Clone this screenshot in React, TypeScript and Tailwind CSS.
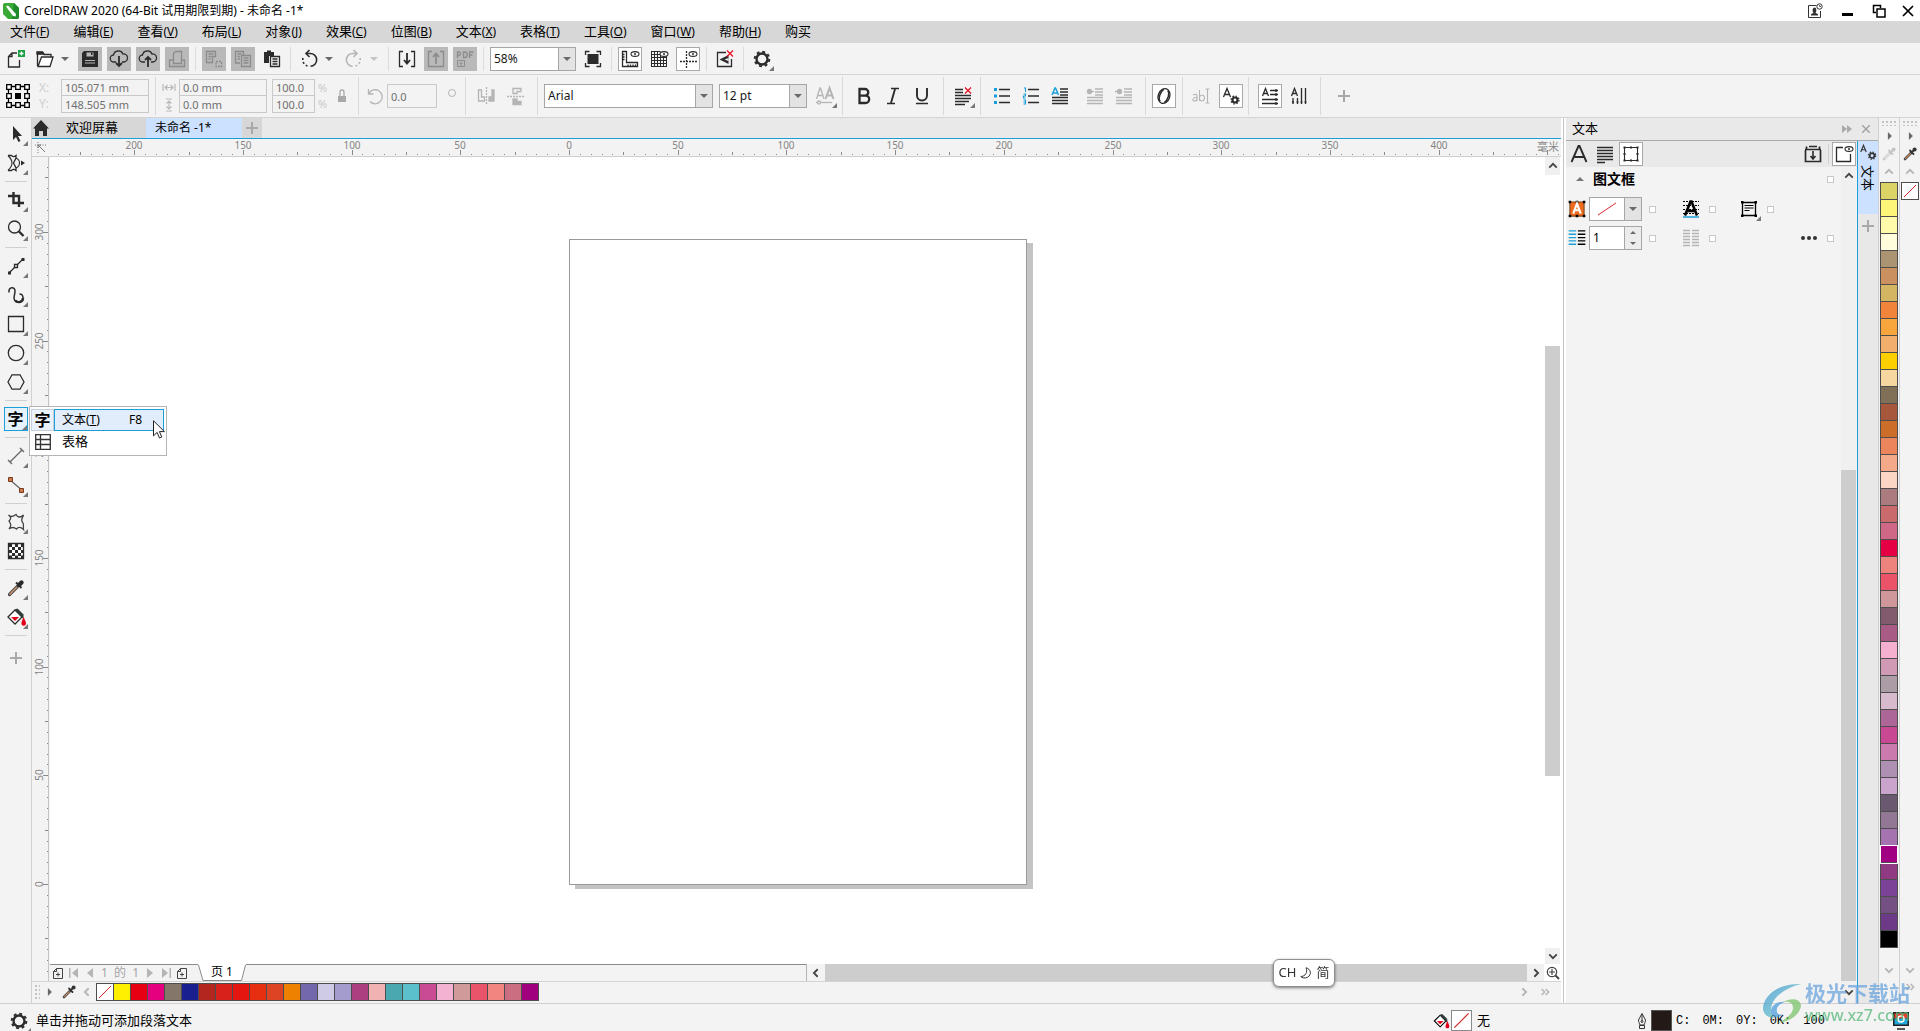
import type { ReactNode } from "react";
import clsx from "clsx";

const MENUS = [
  ["文件", "F"],
  ["编辑", "E"],
  ["查看", "V"],
  ["布局", "L"],
  ["对象", "J"],
  ["效果", "C"],
  ["位图", "B"],
  ["文本", "X"],
  ["表格", "T"],
  ["工具", "O"],
  ["窗口", "W"],
  ["帮助", "H"],
  ["购买", ""],
];

const DOC_COLORS = [
  "#fef000", "#e60012", "#e4007f", "#847668", "#1a1f8f", "#b3261f", "#d8211a",
  "#e5160f", "#e62f10", "#dd4424", "#ee8200", "#7468ad", "#cfcbe6", "#a49ccc",
  "#ab3f80", "#f1b2b4", "#4aa8b0", "#5cc0cc", "#c84b94", "#f3b2d2", "#d19a9a",
  "#e9546b", "#f28580", "#cb6e82", "#a0007e",
];

const PALETTE = [
  "#dcd366", "#fcf578", "#fffbaa", "#fffddb", "#ab9472", "#ca9060", "#d4b562",
  "#f0843b", "#f6a63c", "#f2ae6c", "#fccf00", "#f7d7a0", "#817058", "#a7573c",
  "#cd6d2a", "#ec855c", "#f4aa88", "#fbd6c5", "#ab7b80", "#cb6a6c", "#cf6887",
  "#e50046", "#ee837d", "#eb5468", "#d0979a", "#825c6e", "#a85b84", "#f6b0cf",
  "#d09ab4", "#ab9ca5", "#d7bbcd", "#ac6798", "#c94894", "#cb7aae", "#ae90b2",
  "#cba4ce", "#6a5770", "#927894", "#a573b0", "#a20082", "#8f3a82", "#7b4298",
  "#755082", "#6d3a88", "#000000",
];
const SELECTED = "#a20082";

/* ---------- small shared pieces ---------- */

function Icon({ children, className }: { children: ReactNode; className?: string }) {
  return (
    <svg
      viewBox="0 0 24 24"
      className={clsx("shrink-0", className ?? "size-6")}
      fill="none"
      stroke="currentColor"
      strokeWidth="1.3"
      aria-hidden="true"
    >
      {children}
    </svg>
  );
}

function Corner() {
  return <path d="M24 19v5h-5z" fill="#777" stroke="none" />;
}

type ToolProps = {
  label: string;
  children: ReactNode;
  look?: "plain" | "on" | "dark";
  off?: boolean;
};

function Tool({ label, children, look = "plain", off }: ToolProps) {
  return (
    <button
      type="button"
      aria-label={label}
      title={label}
      className={clsx(
        "size-6 shrink-0",
        look === "on" && "bg-white outline-1 -outline-offset-1 outline-[#a8a8a8]",
        look === "dark" && "bg-[#b9b9b9]",
        off ? (look === "dark" ? "text-[#8c8c8c]" : "text-[#b5b5b5]") : "text-[#2b2b2b]"
      )}
    >
      <Icon>{children}</Icon>
    </button>
  );
}

function Arrow({ label, off }: { label: string; off?: boolean }) {
  return (
    <button
      type="button"
      aria-label={label}
      className={clsx("-ml-[5px] grid w-4 shrink-0 place-items-center", off ? "text-[#c4c4c4]" : "text-[#6a6a6a]")}
    >
      <svg viewBox="0 0 8 4" className="h-1 w-2" fill="currentColor" aria-hidden="true">
        <path d="M0 0h8L4 4z" />
      </svg>
    </button>
  );
}

function Sep() {
  return <span className="mx-px h-6 w-px shrink-0 bg-[#dcdcdc]" />;
}

function Group({ children, className }: { children: ReactNode; className?: string }) {
  return (
    <div className={clsx("flex h-[38px] shrink-0 items-center border-r border-[#d9d9d9]", className)}>{children}</div>
  );
}

function Combo({ label, value, className }: { label: string; value: string; className: string }) {
  return (
    <div className={clsx("relative h-6 shrink-0", className)}>
      <select
        aria-label={label}
        defaultValue={value}
        className="block h-6 w-full appearance-none border border-[#a6a6a6] bg-white pl-[3px] text-xs text-[#1a1a1a]"
      >
        <option>{value}</option>
      </select>
      <span className="pointer-events-none absolute inset-y-px right-px grid w-[17px] place-items-center border-l border-[#a6a6a6] bg-[#e3e3e3]">
        <svg viewBox="0 0 8 4" className="h-1 w-2" fill="#6a6a6a" aria-hidden="true">
          <path d="M0 0h8L4 4z" />
        </svg>
      </span>
    </div>
  );
}

function Pair({ a, b, labels, className }: { a: string; b: string; labels: [string, string]; className: string }) {
  return (
    <div className={clsx("flex shrink-0 flex-col border border-[#c9c9c9] text-[11px] text-[#6f6f6f]", className)}>
      <input aria-label={labels[0]} defaultValue={a} className="h-4 w-full border-b border-[#c9c9c9] pl-[3px]" />
      <input aria-label={labels[1]} defaultValue={b} className="h-4 w-full pl-[3px]" />
    </div>
  );
}

function Tick({ label }: { label: string }) {
  return (
    <input
      type="checkbox"
      aria-label={label}
      className="block size-[7px] shrink-0 appearance-none border border-[#c8c8c8] bg-white"
    />
  );
}

function Chevron({ dir, className }: { dir: "up" | "down" | "left" | "right"; className?: string }) {
  const d = {
    up: "M1.5 8 6 3.5 10.5 8",
    down: "M1.5 4 6 8.5 10.5 4",
    left: "M8 1.5 3.5 6 8 10.5",
    right: "M4 1.5 8.5 6 4 10.5",
  }[dir];
  return (
    <svg viewBox="0 0 12 12" className={className ?? "size-2.5"} fill="none" stroke="currentColor" strokeWidth="2.2" aria-hidden="true">
      <path d={d} />
    </svg>
  );
}

function Plus() {
  return (
    <svg viewBox="0 0 12 12" className="size-3" stroke="#a9a9a9" strokeWidth="2" aria-hidden="true">
      <path d="M6 0v12M0 6h12" />
    </svg>
  );
}

function Triangle() {
  return (
    <svg viewBox="0 0 6 10" className="h-2 w-[5px]" fill="#6a6a6a" aria-hidden="true">
      <path d="M1 0v10l5-5z" />
    </svg>
  );
}

function Dropper({ off }: { off?: boolean }) {
  return (
    <svg viewBox="0 0 16 16" className="size-4" fill="none" aria-hidden="true">
      <path d="M3 13 9.5 6.5" stroke={off ? "#c4c4c4" : "#4a4a4a"} strokeWidth="2.6" strokeLinecap="round" />
      <path d="M3.2 12.8 8.5 7.5" stroke={off ? "#ececec" : "#c98a62"} strokeWidth="1.1" />
      <path d="m8 4.5 3.5 3.5M10 6l2.5-2.5" stroke={off ? "#c4c4c4" : "#333"} strokeWidth="1.8" strokeLinecap="round" />
      <circle cx="12.6" cy="3.4" r="2" fill={off ? "#c4c4c4" : "#333"} />
    </svg>
  );
}

function Bucket() {
  return (
    <>
      <path d="m4 12 7-7 7 7-7 7z" fill="#fff" />
      <path d="m11 4.5 2.5-1 6 6V14L11 5.5z" fill="#2f3b36" stroke="none" />
      <path d="M7 12h8l-4 4z" fill="#e3001b" stroke="none" />
      <path d="M19.5 12c2 4 2.5 5 2.5 6.5a2.3 2.3 0 0 1-4.6 0C17.4 17 18.5 15 19.5 12z" fill="#e3001b" stroke="none" />
    </>
  );
}

function Gear() {
  return (
    <>
      <circle cx="12" cy="12" r="5.5" strokeWidth="2.4" />
      <circle cx="12" cy="12" r="7.3" strokeWidth="2" strokeDasharray="2.87 2.87" />
    </>
  );
}

function Eye() {
  return (
    <>
      <ellipse cx="17" cy="7" rx="4" ry="2.4" strokeWidth="1.1" fill="#fff" />
      <circle cx="17" cy="7" r="1" fill="currentColor" stroke="none" />
    </>
  );
}

function NoFill() {
  return (
    <svg viewBox="0 0 16 16" className="size-full bg-white" stroke="#d8262c" aria-hidden="true">
      <path d="M2 14 14 2" />
    </svg>
  );
}

/* ---------- top bars ---------- */

function TitleBar() {
  return (
    <header className="flex h-[21px] shrink-0 items-center bg-white pl-[3px] text-xs">
      <svg viewBox="0 0 16 16" className="size-4" aria-hidden="true">
        <path d="M0 2a2 2 0 0 1 2-2h9l5 5v9a2 2 0 0 1-2 2H5l-5-5z" fill="#3aa935" />
        <path d="M11 0l5 5v9a2 2 0 0 1-2 2H9z" fill="#1f8a2a" />
        <path d="M3 3.5 5 2.5 13 11l-.5 2.5L10 13z" fill="#fff" />
      </svg>
      <h1 className="ml-[5px] grow">CorelDRAW 2020 (64-Bit 试用期限到期) - 未命名 -1*</h1>
      <button type="button" aria-label="账户" className="mr-2 text-[#333]">
        <svg viewBox="0 0 16 16" className="size-4" fill="none" stroke="currentColor" aria-hidden="true">
          <path d="M9.5 2.5h-8v12h12V8" />
          <path d="M4 12.5V11l2.5-1C5 8 5.500 4.500 7.500 4.500S10 8 8.500 10l2.500 1v1.500z" fill="currentColor" stroke="none" />
          <circle cx="12.5" cy="3.5" r="2.7" fill="#fff" />
          <path d="M12.5 2v1.500H14" strokeWidth=".8" />
        </svg>
      </button>
      <button type="button" aria-label="最小化" className="grid w-8 place-items-center pt-2">
        <span className="block h-[3px] w-[11px] bg-black" />
      </button>
      <button type="button" aria-label="还原" className="mr-3.5 ml-[9px]">
        <svg viewBox="0 0 14 14" className="size-3.5" fill="none" stroke="#000" strokeWidth="1.5" aria-hidden="true">
          <path d="M4 8.5H1.5v-7h7V4M5 5h8v8H5z" />
        </svg>
      </button>
      <button type="button" aria-label="关闭" className="mr-1 grid size-4 place-items-center">
        <svg viewBox="0 0 12 12" className="size-3" stroke="#000" strokeWidth="1.7" aria-hidden="true">
          <path d="m1 1 10 10M11 1 1 11" />
        </svg>
      </button>
    </header>
  );
}

function MenuBar() {
  return (
    <nav className="flex h-[22px] shrink-0 items-center gap-6 bg-[#d7d7d7] pl-2.5 text-[13px]">
      {MENUS.map(([name, key]) => (
        <button key={name} type="button" className="shrink-0">
          {name}
          {key && (
            <span className="text-xs">
              (<u className="underline-offset-1">{key}</u>)
            </span>
          )}
        </button>
      ))}
    </nav>
  );
}

function StandardBar() {
  return (
    <div role="toolbar" aria-label="标准" className="flex h-8 shrink-0 items-center gap-[5px] border-b border-[#d4d4d4] pl-1">
      <Tool label="新建">
        <path d="M13 6H8L4.5 9.5V20h11v-7M8 6v3.5H4.5" />
        <path d="M14 3h7v7h-7z" fill="#1e9e43" stroke="none" />
        <path d="M17.5 4.5v4M15.5 6.5h4" stroke="#fff" />
      </Tool>
      <Tool label="打开">
        <path d="M4.5 19V5.5h5l1.5 2h7V10" />
        <path d="M5 19.5 8.5 10H20l-3 9.5z" fill="#fff" />
        <path d="M4 5h5.5L11 7H4z" fill="currentColor" />
      </Tool>
      <Arrow label="最近用过的文件" />
      <Tool label="保存" look="dark">
        <path d="M6 4h14v16H4V6z" fill="currentColor" stroke="none" />
        <path d="M8.5 5.5h7v4h-7z" fill="#b9b9b9" stroke="none" />
        <path d="M13 5.5h1.500V8H13z" fill="currentColor" stroke="none" />
        <path d="M7 13.5h10M7 16h10" stroke="#b9b9b9" strokeWidth="1" />
      </Tool>
      <Tool label="从云中打开" look="dark">
        <path d="M9 15H7a3.5 3.5 0 0 1-.5-7 5 5 0 0 1 9.5-1 4 4 0 0 1 1 8h-2" />
        <path d="M12 9v10M9 16l3 3 3-3" strokeWidth="1.8" />
      </Tool>
      <Tool label="保存到云" look="dark">
        <path d="M9 15H7a3.5 3.5 0 0 1-.5-7 5 5 0 0 1 9.5-1 4 4 0 0 1 1 8h-2" />
        <path d="M12 20V10M9 13l3-3 3 3" strokeWidth="1.8" />
      </Tool>
      <Tool label="打印" look="dark" off>
        <path d="M8.5 14V6.5l2-2h6V14M4.5 19.5V13h4v3.5h8V13h3v6.5z" />
      </Tool>
      <Sep />
      <Tool label="剪切" look="dark" off>
        <path d="M4.5 4.5h9v5h-3v6h-6zM6.5 7h5M6.5 9.5h3M6.5 12h2" />
        <path d="M14 14.5h5.5v5H14z" strokeDasharray="2 1" />
      </Tool>
      <Tool label="复制" look="dark" off>
        <path d="M9 16H4.5V4.5h8V8M6.5 7h4M6.5 9.5H9M6.5 12H9" />
        <path d="M10.5 8.5h9v11h-9zM12.5 11h5M12.5 13.5h5M12.5 16h5" />
      </Tool>
      <Tool label="粘贴">
        <path d="M4 5h3V3.5h4V5h3v4H9v7H4z" fill="currentColor" stroke="none" />
        <path d="M10.5 9.5h9v10h-9zM12.5 12h5M12.5 14.5h5M12.5 17h5" />
      </Tool>
      <Sep />
      <Tool label="撤消">
        <path d="M9.5 6.5H13a6.4 6.4 0 0 1 .5 12.8" strokeWidth="1.6" />
        <path d="M12.5 3 9 6.5l3.5 3.5" strokeWidth="1.6" />
        <path d="M10.5 19A6.5 6.5 0 0 1 6 11" strokeWidth="1.6" strokeDasharray="2 2" />
      </Tool>
      <Arrow label="撤消列表" />
      <Tool label="重做" off>
        <path d="M14.5 6.5H11a6.4 6.4 0 0 0-.5 12.8" strokeWidth="1.6" />
        <path d="M11.5 3 15 6.5 11.5 10" strokeWidth="1.6" />
        <path d="M13.5 19a6.5 6.5 0 0 0 4.5-8" strokeWidth="1.6" strokeDasharray="2 2" />
      </Tool>
      <Arrow label="重做列表" off />
      <Sep />
      <Tool label="导入">
        <path d="M8 4.5H4.5v15H8M16 4.5h3.5v15H16" />
        <path d="M12 6v10M9 13l3 3.5 3-3.500" strokeWidth="1.8" />
      </Tool>
      <Tool label="导出" look="dark" off>
        <path d="M8 4.5H4.5v15h15v-15H16" />
        <path d="M12 17V7M9 10l3-3.500 3 3.500" strokeWidth="1.8" />
      </Tool>
      <Tool label="发布为 PDF" look="dark" off>
        <path d="M4.5 11V5h2a2 2 0 0 1 0 3.500h-2M10.5 5v5.500h1.500a2 2.500 0 0 0 0-5.500zM16.5 11V5h4M16.5 8h3" />
        <path d="M4.5 13.5h7v6h-7zM8 19v-3.500M6.5 17 8 15.500 9.5 17" strokeWidth="1" />
      </Tool>
      <Sep />
      <Combo label="缩放级别" value="58%" className="w-[86px]" />
      <Tool label="全屏预览">
        <path d="M6.5 7h11v10h-11z" fill="currentColor" stroke="none" />
        <path d="M4.5 8V4.5h4M15.5 4.5h4V8M19.5 16v3.500h-4M8.5 19.500h-4V16" />
      </Tool>
      <Sep />
      <Tool label="显示标尺" look="on">
        <path d="M4.5 4.500h4v11h11v4h-15zM4.5 7.500h2M4.5 10h2M4.5 12.500h2M10 19.500v-2M12.5 19.500v-2M15 19.500v-2M17.5 19.500v-2" />
        <Eye />
      </Tool>
      <Tool label="显示网格">
        <path d="M4.5 4.500v15M7.500 4.500v15M10.5 4.500v15M13.5 4.500v15M16.5 8v11.500M19.5 9v10.500M4 4.500h9M4 7.500h9M4 10.500h16M4 13.500h16M4 16.500h16M4 19.500h16" strokeWidth="1" />
        <Eye />
      </Tool>
      <Tool label="显示辅助线" look="on">
        <path d="M10.5 4v17M4 14.500h17" strokeDasharray="2 1" />
        <Eye />
      </Tool>
      <Sep />
      <Tool label="贴齐">
        <path d="M13 5.500H4.500v14h14V12" />
        <path d="M6.5 12.5 15.500 8v9z" fill="currentColor" stroke="none" />
        <path d="m11.5 12.500 4-1.500v3z" fill="#f3f3f3" stroke="none" />
        <path d="m14 3.500 6 6M20 3.500l-6 6" stroke="#e81123" />
      </Tool>
      <Sep />
      <Tool label="选项">
        <Gear />
        <Corner />
      </Tool>
    </div>
  );
}

function PropertyBar() {
  return (
    <div role="toolbar" aria-label="属性栏" className="flex h-[43px] shrink-0 items-center border-b border-[#d4d4d4] pl-1.5 text-xs">
      <Group className="w-[150px]">
        <button type="button" aria-label="对象原点" className="text-black">
          <Icon>
            <path d="M2.5 2.500h19v19h-19z" />
            <path
              d="M.7.7h4.600v4.600H.7zM9.700.7h4.600v4.600H9.700zM18.700.7h4.600v4.600h-4.600zM.7 9.700h4.600v4.600H.7zM18.700 9.700h4.600v4.600h-4.600zM.7 18.700h4.600v4.600H.7zM9.700 18.700h4.600v4.600H9.700zM18.700 18.700h4.600v4.600h-4.600z"
              fill="#fff"
            />
            <path d="M9 9h6v6H9z" fill="#000" stroke="none" />
          </Icon>
        </button>
        <div className="flex w-[31px] flex-col pl-[9px] leading-4 text-[#cfcfcf]">
          <span>X:</span>
          <span>Y:</span>
        </div>
        <Pair a="105.071 mm" b="148.505 mm" labels={["X", "Y"]} className="w-[88px]" />
      </Group>
      <Group className="w-[203px]">
        <svg viewBox="0 0 14 34" className="mr-[3px] ml-1.5 h-[34px] w-3.5" fill="none" stroke="#b9b9b9" strokeWidth="1.2" aria-hidden="true">
          <path d="M1 5v7M13 5v7M3 8.500h8M5.5 6 3 8.500 5.5 11M8.5 6 11 8.500 8.5 11M4 20h6M4 32h6M7 22v8M4.5 24.500 7 22l2.500 2.500M4.5 27.500 7 30l2.500-2.500" />
        </svg>
        <Pair a="0.0 mm" b="0.0 mm" labels={["宽度", "高度"]} className="w-[88px]" />
        <Pair a="100.0" b="100.0" labels={["水平缩放", "垂直缩放"]} className="ml-[5px] w-[43px]" />
        <div className="ml-[3px] flex w-3 flex-col text-[11px] leading-4 text-[#c9c9c9]">
          <span>%</span>
          <span>%</span>
        </div>
        <button type="button" aria-label="锁定比率" className="text-[#a9a9a9]">
          <Icon>
            <path d="M10 12V8a2 2 0 0 1 4 0v4" />
            <path d="M8 12h8v6H8z" fill="currentColor" stroke="none" />
          </Icon>
        </button>
      </Group>
      <Group className="w-[107px]">
        <span className="ml-1 text-[#b5b5b5]">
          <Icon>
            <path d="M6 9.500a7 7 0 1 1 1 8M5.5 5v5h5" />
          </Icon>
        </span>
        <input aria-label="旋转角度" defaultValue="0.0" className="h-6 w-[50px] border border-[#c9c9c9] pl-[3px] text-[11px] text-[#6f6f6f]" />
        <span className="mb-1.5 ml-[11px] size-2 rounded-full border border-[#b5b5b5]" />
      </Group>
      <Group className="w-[72px] gap-1.5 pl-2">
        <Tool label="水平镜像" off>
          <path d="M4.5 6v11h6v-4h-3V6z" />
          <path d="M12.5 3v18" strokeDasharray="2 1" />
          <path d="M20 6v11h-5v-4h3V6z" fill="currentColor" />
        </Tool>
        <Tool label="垂直镜像" off>
          <path d="M9 4.500h8v3h-4v2H9z" />
          <path d="M3 12.500h18" strokeDasharray="2 1" />
          <path d="M9 15h4v2.500h4v3H9z" fill="currentColor" />
        </Tool>
      </Group>
      <Group className="w-[305px] gap-1.5 pl-1.5">
        <Combo label="字体列表" value="Arial" className="w-[169px]" />
        <Combo label="字体大小" value="12 pt" className="w-[88px]" />
        <Tool label="可变字体" off>
          <path d="m3.5 15 3.500-11h.5L11 15M5 11.500h4.500" />
          <path d="m12.5 15 4-11 4 11M14 11.500h5" strokeWidth="2" />
          <path d="M3 18.500h16" />
          <circle cx="6" cy="18.5" r="1.5" fill="#f3f3f3" />
          <Corner />
        </Tool>
      </Group>
      <Group className="w-[101px] gap-[5px] pl-[9px]">
        <Tool label="粗体">
          <path d="M7.5 5v14h6a3.700 3.700 0 0 0 0-7.400h-6 5.500a3.300 3.300 0 0 0 0-6.600z" strokeWidth="2.3" />
        </Tool>
        <Tool label="斜体">
          <path d="M10 4.500h8M6 19.500h8" />
          <path d="m14 5-4 14" strokeWidth="1.9" />
        </Tool>
        <Tool label="下划线">
          <path d="M7 4v7.500a5 5 0 0 0 10 0V4" strokeWidth="1.9" />
          <path d="M6 19.500h12" strokeWidth="1.5" />
        </Tool>
      </Group>
      <Group className="w-[37px] pl-[7px]">
        <Tool label="文本对齐">
          <path d="M4 5.500h8M4 8.500h8M4 11.500h16M4 14.500h16M4 17.500h14M4 20.500h10" />
          <path d="m14 3.500 6 6M20 3.500l-6 6" stroke="#e81123" />
          <Corner />
        </Tool>
      </Group>
      <Group className="w-[165px] gap-[5px] pl-[9px]">
        <Tool label="项目符号列表">
          <path d="M4 4h3v3H4zM4 10.500h3v3H4zM4 17h3v3H4z" fill="#1a9fd9" stroke="none" />
          <path d="M9 5.500h11M9 12h11M9 18.500h11" />
        </Tool>
        <Tool label="编号列表">
          <path d="M5 4h1.500v4M4.5 10h2v2h-2v2h2M4.5 16h2v4h-2M4.5 18h2" stroke="#1a9fd9" strokeWidth="1.1" />
          <path d="M9 5.500h11M9 12h11M9 18.500h11" />
        </Tool>
        <Tool label="首字下沉">
          <path d="M4 11 7 4h.5l3 7M5 9h4.500" stroke="#1a9fd9" strokeWidth="1.5" />
          <path d="M12 5h8M12 8h8M12 11h8M4 13.500h16M4 16.500h16M4 19.500h16" />
        </Tool>
        <span className="w-px" />
        <Tool label="减少缩进" off>
          <path d="M12 5h8M12 8h8M12 11h8M4 13.500h16M4 16.500h16M4 19.500h16" />
          <path d="M6 7.500h5" />
          <circle cx="6.5" cy="7.5" r="2.7" fill="currentColor" stroke="none" />
        </Tool>
        <Tool label="增加缩进" off>
          <path d="M12 5h8M12 8h8M12 11h8M4 13.500h16M4 16.500h16M4 19.500h16" />
          <path d="M3 7.500h5" />
          <circle cx="7.5" cy="7.5" r="2.7" fill="currentColor" stroke="none" />
        </Tool>
      </Group>
      <Group className="w-[37px] pl-1.5">
        <Tool label="交互式 OpenType" look="on">
          <ellipse cx="12" cy="12" rx="5.8" ry="7.5" transform="rotate(20 12 12)" strokeWidth="1.3" />
          <path d="M8.2 17.500c-2.500-3 0-9.500 3.500-12M15.8 6.500c2.500 3 0 9.500-3.500 12" strokeWidth="1.5" />
        </Tool>
      </Group>
      <Group className="w-[66px] gap-1.5 pl-1.5">
        <Tool label="编辑文本" off>
          <path d="M4 11c3-1.500 4-.5 4 1v5M8 13.500c-5-.5-5 3.500-2.500 3.500 1.500 0 2.500-1 2.500-2M10.5 6v11M10.5 13c1-2.500 5-2.500 5 1s-4 4-5 1M16.5 5h4M18.5 5v14M16.5 19h4" strokeWidth="1.1" />
        </Tool>
        <Tool label="文本属性" look="on">
          <path d="M4.5 13 8 4.500 11.500 13M5.5 10.500h5" />
          <circle cx="16" cy="16" r="2.5" strokeWidth="2.2" />
          <circle cx="16" cy="16" r="4" strokeWidth="1.2" strokeDasharray="1.57 1.57" />
        </Tool>
      </Group>
      <Group className="w-[72px] gap-[5px] pl-[9px]">
        <Tool label="水平方向" look="on">
          <path d="m4.5 12 3-7.500 3 7.500M5.5 9.500h4" />
          <path d="M12 6.500h8M12 10.500h8M4 15.500h16M4 19.500h16M18 5v3M18 9v3M18 14v3M18 18v3" />
        </Tool>
        <Tool label="垂直方向">
          <path d="m4.5 12 3-7.500 3 7.500M5.5 9.500h4" />
          <path d="M14.5 4v16M18.5 4v16M6 14v6M10.5 14v6M5 18h2M9.5 18h2M13.5 18h2M17.5 18h2" />
        </Tool>
      </Group>
      <button type="button" aria-label="自定义" className="ml-[17px]">
        <Plus />
      </button>
    </div>
  );
}

/* ---------- toolbox ---------- */

function ToolSep() {
  return <span className="my-px h-px w-[22px] shrink-0 bg-[#d0d0d0]" />;
}

function Toolbox() {
  return (
    <aside aria-label="工具箱" className="relative flex w-8 shrink-0 flex-col items-center gap-[5px] border-r border-[#d0d0d0] pt-1">
      <Tool label="选择">
        <path d="M9 4v14l3-3 2.500 5 2-1-2.500-5h4z" fill="currentColor" stroke="none" />
        <Corner />
      </Tool>
      <Tool label="形状">
        <path d="M4 4.500h3.500c1.500 1.500 3 1.500 4.500 0v2.500L9.500 12l2.500 5v2.500c-1.500-1.500-3-1.500-4.500 0H4" />
        <path d="M4 4.500c3 3 4 5 4 7.500s-1 4.500-4 7.500M12 7c2.500 1 3.500 3 3.500 5s-1 4-3.500 5" strokeWidth="1.1" />
        <path d="m17 9.500 4 2.500-4 2.500z" fill="currentColor" stroke="none" />
        <Corner />
      </Tool>
      <ToolSep />
      <Tool label="裁剪">
        <path d="M4 8h11v11M9.5 4v11H20" strokeWidth="2.4" />
        <Corner />
      </Tool>
      <Tool label="缩放">
        <circle cx="10.5" cy="10" r="6" />
        <path d="m15 14.500 4.500 4.500" strokeWidth="2.4" />
        <Corner />
      </Tool>
      <ToolSep />
      <Tool label="手绘">
        <path d="m5 19 14-14" />
        <path d="M4 17.500h3v3H4zM17.5 4h3v3h-3z" fill="currentColor" stroke="none" />
        <path d="M10.5 10.500h3v3h-3z" fill="#fff" />
        <Corner />
      </Tool>
      <Tool label="艺术笔">
        <path d="M5 9.500c-1-6 6.500-6.500 6-1 0 3-2 6-.5 8.500 2 3.500 8.500 2.500 8.500-2 0-2.500-1.500-4-3.500-4" strokeWidth="1.5" />
        <path d="M11.5 17.500c2.500 3 7.500 1.500 7.500-2.500" strokeWidth="2.4" />
        <Corner />
      </Tool>
      <Tool label="矩形">
        <path d="M4.5 4.500h15v15h-15z" />
        <Corner />
      </Tool>
      <Tool label="椭圆形">
        <circle cx="12" cy="12" r="7.7" />
        <Corner />
      </Tool>
      <Tool label="多边形">
        <path d="M8 4.800h8l4 7.200-4 7.200H8L4 12z" />
        <Corner />
      </Tool>
      <ToolSep />
      <button
        type="button"
        aria-label="文本"
        className="relative grid size-6 shrink-0 place-items-center bg-[#e5f1fb] text-base leading-6 font-bold outline-1 -outline-offset-1 outline-[#1a9fd9]"
      >
        字
        <svg viewBox="0 0 5 5" className="absolute right-px bottom-px size-[5px]" fill="#777" aria-hidden="true">
          <path d="M5 0v5H0z" />
        </svg>
      </button>
      <ToolSep />
      <Tool label="平行度量">
        <path d="m6 18 12-12M4 16l4 4M16 4l4 4" stroke="#666" />
        <Corner />
      </Tool>
      <Tool label="连接器">
        <path d="m6 7 13 11" stroke="#666" />
        <path d="M4.5 4.500h4v4h-4zM15.5 15.500h4v4h-4z" fill="#c8794a" stroke="#7a3a1c" strokeWidth="1" />
        <Corner />
      </Tool>
      <ToolSep />
      <Tool label="阴影">
        <path d="M4.500 5c2 2 4.500 2 7.500-.5 1.500 3 4.500 3.500 7.500.5-1 3-3.500 5-.5 8 1 2 0 4 .5 6.500-3-3-5.500-2.500-7-.5-2.500-2-4.500-2.500-7.500 0 3-3.500 1.500-5.500 0-8C7.500 9 7 7 4.500 5z" stroke="#444" />
        <Corner />
      </Tool>
      <Tool label="透明度">
        <path d="M4.5 4.500h15v15h-15z" fill="#fff" />
        <path d="M5 6.500h14M5 12.500h14M5 18h14" strokeWidth="3" strokeDasharray="3 3" />
        <path d="M8 9.500h12M8 15.500h12" strokeWidth="3" strokeDasharray="3 3" />
      </Tool>
      <ToolSep />
      <Tool label="颜色滴管">
        <path d="m5.5 18.500 8-8" stroke="#444" strokeWidth="3.2" strokeLinecap="round" />
        <path d="m5.5 18.500 7.500-7.500" stroke="#d39a72" strokeWidth="1.4" />
        <path d="m12 6.500 5.500 5.500" strokeWidth="1.8" />
        <path d="m15.5 8.500 2-2" strokeWidth="4.4" strokeLinecap="round" />
        <Corner />
      </Tool>
      <Tool label="交互式填充">
        <Bucket />
        <Corner />
      </Tool>
      <ToolSep />
      <button type="button" aria-label="添加工具" className="grid h-8 w-6 shrink-0 place-items-center">
        <Plus />
      </button>
      <TextFlyout />
    </aside>
  );
}

function TextFlyout() {
  return (
    <div role="menu" className="absolute top-[288px] left-[29px] z-20 w-[138px] border border-[#b4b4b4] bg-white p-px pt-0.5 pb-[3px] text-xs">
      <button type="button" role="menuitem" className="flex h-[22px] w-[133px] items-stretch text-left">
        <span className="grid w-[23px] place-items-center border border-[#c3cfdb] bg-[#e9f2fb] text-base leading-5 font-bold">字</span>
        <span className="flex grow items-center border border-[#1a9fd9] bg-[#e1edfa] pl-[7px]">
          <span className="w-[67px]">
            文本(<u>T</u>)
          </span>
          F8
        </span>
      </button>
      <button type="button" role="menuitem" className="flex h-[21px] items-center text-left">
        <svg viewBox="0 0 16 16" className="mx-1 size-4" fill="none" stroke="#333" strokeWidth="1.3" aria-hidden="true">
          <path d="M.7.7h14.600v14.600H.7zM5.5.7v14.600M5.5 5.500h9.800M.7 10.500h14.600M.7 5.500H5" />
        </svg>
        <span className="pl-[7px] text-[13px]">表格</span>
      </button>
      <svg viewBox="0 0 12 19" className="absolute top-[13px] left-[123px] h-[19px] w-3" fill="#fff" stroke="#222" aria-hidden="true">
        <path d="M.5.8v15l3.600-3.400 2.400 5.600 2.300-1-2.400-5.400h5z" />
      </svg>
    </div>
  );
}

/* ---------- rulers and drawing area ---------- */

const UNIT = 108.7 / 50;
const range = (from: number, to: number, step: number) =>
  Array.from({ length: Math.floor((to - from) / step) + 1 }, (_, i) => from + i * step);

const tickLength = (v: number) => (v % 50 === 0 ? 5 : v % 25 === 0 ? 3 : 1);

function TopRuler() {
  const zero = 520;
  return (
    <svg className="h-[17px] min-w-0 grow" role="img" aria-label="水平标尺">
      {range(-235, 455, 5).map((v) => {
        const x = Math.round(zero + v * UNIT);
        return <path key={v} d={`M${x + 0.5} ${16 - tickLength(v)}v${tickLength(v)}`} stroke="#8a8a8a" />;
      })}
      {range(-200, 400, 50).map((v) => (
        <text key={v} x={Math.round(zero + v * UNIT)} y="10" textAnchor="middle" fill="#858585" fontSize="10">
          {Math.abs(v)}
        </text>
      ))}
    </svg>
  );
}

function SideRuler() {
  const zero = 727;
  return (
    <svg className="w-[17px] shrink-0 grow border-r border-[#c4c4c4]" role="img" aria-label="垂直标尺">
      {range(-40, 330, 5).map((v) => {
        const y = Math.round(zero - v * UNIT);
        return <path key={v} d={`M${16 - tickLength(v)} ${y + 0.5}h${tickLength(v)}`} stroke="#8a8a8a" />;
      })}
      {range(0, 300, 50).map((v) => {
        const y = Math.round(zero - v * UNIT);
        return (
          <text key={v} x="11" y={y} transform={`rotate(-90 11 ${y})`} textAnchor="middle" fill="#858585" fontSize="10">
            {v}
          </text>
        );
      })}
    </svg>
  );
}

function DocTabs() {
  return (
    <div className="flex h-[21px] shrink-0 items-stretch border-b border-[#1a9fd9] bg-[#e9e9e9] text-[13px]">
      <button type="button" aria-label="主页" className="grid w-[17px] place-items-center bg-[#d7d7d7]">
        <svg viewBox="0 0 16 16" className="size-4" fill="#2b2b2b" aria-hidden="true">
          <path d="M8 0 0 8.500h2V16h4v-5h4v5h4V8.500h2z" />
        </svg>
      </button>
      <button type="button" className="w-[97px] bg-[#d7d7d7] pl-[17px] text-left">欢迎屏幕</button>
      <button type="button" className="w-24 bg-[#cce0ff] pl-[9px] text-left text-xs">未命名 -1*</button>
      <button type="button" aria-label="新建文档" className="grid w-5 place-items-center bg-[#d7d7d7]">
        <Plus />
      </button>
    </div>
  );
}

function VScroll() {
  return (
    <div className="flex w-4 shrink-0 flex-col bg-white pr-px text-[#444]">
      <button type="button" aria-label="向上滚动" className="grid h-[18px] shrink-0 place-items-center bg-[#f0f0f0]">
        <Chevron dir="up" />
      </button>
      <div className="flex grow flex-col">
        <span className="grow-[171]" />
        <span className="grow-[429] bg-[#cdcdcd]" />
        <span className="grow-[172]" />
      </div>
      <button type="button" aria-label="向下滚动" className="grid h-4 shrink-0 place-items-center bg-[#f0f0f0]">
        <Chevron dir="down" />
      </button>
    </div>
  );
}

function PageIcon() {
  return (
    <svg viewBox="0 0 10 11" className="h-[11px] w-2.5" fill="none" stroke="#444" aria-hidden="true">
      <path d="M3.5.5h6v10h-9v-7zM3.5.5v3h-3M5 4.500v4M3 6.500h4" />
    </svg>
  );
}

function NavArrow({ label, d }: { label: string; d: string }) {
  return (
    <button type="button" aria-label={label} className="grid size-4 place-items-center">
      <svg viewBox="0 0 10 10" className="size-2.5" fill="#b5b5b5" aria-hidden="true">
        <path d={d} />
      </svg>
    </button>
  );
}

function PageBar() {
  return (
    <div className="flex h-[17px] shrink-0 items-center text-xs text-[#a5a5a5]">
      <div className="flex h-full grow basis-0 items-center border-t border-[#8a8a8a] pl-0.5">
        <button type="button" aria-label="在前面添加页面" className="grid w-3 place-items-center">
          <PageIcon />
        </button>
        <div className="flex items-center pl-0.5">
          <NavArrow label="第一页" d="M0 0h1.500v10H0zM9 0v10L3 5z" />
          <NavArrow label="上一页" d="M8 0v10L2 5z" />
        </div>
        <span className="w-11 text-center whitespace-pre">1  的  1</span>
        <div className="flex items-center">
          <NavArrow label="下一页" d="M2 0v10l6-5z" />
          <NavArrow label="最后一页" d="M1 0v10l6-5zM8.5 0H10v10H8.500z" />
        </div>
        <button type="button" aria-label="在后面添加页面" className="grid w-4 place-items-center">
          <PageIcon />
        </button>
        <button type="button" className="relative -mt-0.5 ml-2 h-[17px] w-12 text-black">
          <svg viewBox="0 0 48 17" className="absolute inset-0 h-[17px] w-12" aria-hidden="true">
            <path d="M0 0h48l-4 16.500H5z" fill="#fff" />
            <path d="M.5 1 5 16.500h38.500L47.5 1" fill="none" stroke="#8a8a8a" />
          </svg>
          <span className="relative text-xs">页 1</span>
        </button>
      </div>
      <span className="h-full w-px bg-[#b4b4b4]" />
      <div className="flex h-full grow basis-0 items-stretch text-[#444]">
        <button type="button" aria-label="向左滚动" className="grid w-[18px] place-items-center">
          <Chevron dir="left" />
        </button>
        <span className="grow bg-[#cdcdcd]" />
        <button type="button" aria-label="向右滚动" className="grid w-[17px] place-items-center bg-[#f0f0f0]">
          <Chevron dir="right" />
        </button>
        <button type="button" aria-label="导航器" className="grid w-[17px] place-items-center bg-white">
          <svg viewBox="0 0 14 14" className="size-3.5" fill="none" stroke="#444" strokeWidth="1.2" aria-hidden="true">
            <circle cx="6" cy="6" r="4.7" />
            <path d="M6 3v6M3 6h6" />
            <path d="m9.500 9.500 3.500 3.500" strokeWidth="2" />
          </svg>
        </button>
      </div>
    </div>
  );
}

function DocPalette() {
  return (
    <div className="flex h-[22px] shrink-0 items-center border-t border-[#d4d4d4] pb-0.5 text-[#b5b5b5]">
      <Grip className="ml-0.5 h-4 w-1.5" />
      <button type="button" aria-label="调色板菜单" className="ml-[3px] grid w-3 place-items-center">
        <Triangle />
      </button>
      <button type="button" aria-label="滴管" className="ml-1.5">
        <Dropper />
      </button>
      <button type="button" aria-label="向左" className="mr-1 ml-[5px] grid w-2.5 place-items-center">
        <Chevron dir="left" />
      </button>
      <div className="flex border border-[#4d4d4d]">
        <button type="button" aria-label="无" className="h-4 w-[17px] border-r border-[#4d4d4d]">
          <NoFill />
        </button>
        {DOC_COLORS.map((c) => (
          <button
            key={c}
            type="button"
            aria-label={c}
            className="h-4 w-[17px] border-r border-[#4d4d4d] last:w-4 last:border-r-0"
            style={{ backgroundColor: c }}
          />
        ))}
      </div>
      <button type="button" aria-label="向右" className="ml-auto">
        <Chevron dir="right" />
      </button>
      <button type="button" aria-label="更多" className="mx-2.5 flex">
        <Chevron dir="right" className="-mr-1 size-2" />
        <Chevron dir="right" className="size-2" />
      </button>
    </div>
  );
}

function Grip({ className }: { className?: string }) {
  return <span className={clsx("block shrink-0 bg-[radial-gradient(#c4c4c4_1px,transparent_1px)] bg-size-[4px_4px]", className)} />;
}

function Workspace() {
  return (
    <main className="flex min-w-0 grow flex-col">
      <DocTabs />
      <div className="flex h-[18px] shrink-0 border-b border-[#cfcfcf]">
        <div className="grid w-[17px] shrink-0 place-items-center">
          <svg viewBox="0 0 12 12" className="size-3" fill="none" stroke="#777" aria-hidden="true">
            <path d="M3 0v12M0 3h12" strokeDasharray="1 1.5" />
            <path d="m3 3 7 7M3 6V3h3" />
          </svg>
        </div>
        <div className="relative flex min-w-0 grow">
          <TopRuler />
          <span className="absolute top-0 right-0.5 text-[11px] leading-4 text-[#8a8a8a]">毫米</span>
        </div>
      </div>
      <div className="flex min-h-0 grow">
        <div className="flex w-[18px] shrink-0 flex-col">
          <SideRuler />
        </div>
        <div className="flex min-w-0 grow flex-col">
          <div className="flex min-h-0 grow">
            <div className="relative min-w-0 grow overflow-hidden bg-white">
              <div className="absolute top-[82px] left-[519px] h-[646px] w-[458px] border border-[#9a9a9a] bg-white shadow-[6px_4px_0_#c4c4c4]" />
            </div>
            <VScroll />
          </div>
          <PageBar />
        </div>
      </div>
      <DocPalette />
    </main>
  );
}

/* ---------- text docker ---------- */

function TextDocker() {
  return (
    <section className="flex w-[312px] shrink-0 flex-col text-xs" aria-label="文本">
      <div className="flex h-[23px] shrink-0 items-center border-b border-[#a9a9a9] bg-[#e9e9e9] pl-1.5">
        <h2 className="grow text-[13px]">文本</h2>
        <button type="button" aria-label="折叠" className="mr-2.5">
          <svg viewBox="0 0 10 8" className="h-2 w-2.5" fill="#a9a9a9" aria-hidden="true">
            <path d="m0 0 5 4-5 4zM5 0l5 4-5 4z" />
          </svg>
        </button>
        <button type="button" aria-label="关闭泊坞窗" className="mr-2">
          <svg viewBox="0 0 8 8" className="size-2" stroke="#a0a0a0" strokeWidth="1.4" aria-hidden="true">
            <path d="m0 0 8 8M8 0 0 8" />
          </svg>
        </button>
      </div>
      <div className="flex min-h-0 grow">
        <div className="flex min-w-0 grow flex-col border-r border-[#1a9fd9]">
          <div className="flex h-[26px] shrink-0 items-center bg-[#e9e9e9] pl-px">
            <Tool label="字符">
              <path d="M4.5 20 11.500 4h1l7 16M7 15h10" strokeWidth="1.9" />
            </Tool>
            <span className="w-0.5" />
            <Tool label="段落">
              <path d="M4 5.500h16M4 8.500h16M4 11.500h16M4 14.500h16M4 17.500h16M4 20.500h8" />
            </Tool>
            <span className="w-0.5" />
            <Tool label="图文框" look="on">
              <path d="M5.5 5.500h13v13h-13z" strokeWidth="1.1" />
              <path d="M4.5 4.500h2v2h-2zM11 4.500h2v2h-2zM17.5 4.500h2v2h-2zM4.5 17.500h2v2h-2zM11 17.500h2v2h-2zM17.5 17.500h2v2h-2zM4.5 11h2v2h-2zM17.5 11h2v2h-2z" fill="currentColor" stroke="none" />
            </Tool>
            <span className="grow" />
            <Tool label="导入样式">
              <path d="M4.5 8v11.500h15V8M8 4.500h8M4 7.500h16M5.5 4.500v3M18.5 4.500v3" strokeWidth="1.7" />
              <path d="M12 9v8M9.5 14l2.500 3 2.500-3" strokeWidth="1.6" />
            </Tool>
            <span className="mx-[3px] h-5 w-px bg-[#cfcfcf]" />
            <Tool label="显示高级选项" look="on">
              <path d="M11 5.500H4.500v14h14V12" />
              <Eye />
            </Tool>
            <span className="w-px" />
          </div>
          <div className="flex min-h-0 grow">
            <div className="min-w-0 grow">
              <div className="flex h-6 items-center pr-[7px] pl-2.5">
                <svg viewBox="0 0 8 4" className="mr-[9px] h-1 w-2" fill="#777" aria-hidden="true">
                  <path d="M0 4h8L4 0z" />
                </svg>
                <h3 className="grow text-sm leading-5 font-bold">图文框</h3>
                <Tick label="图文框" />
              </div>
              <div className="flex h-[30px] items-center pt-1.5 pl-px">
                <Icon className="mr-0.5 size-5">
                  <path d="M3.5 3.500h17v17h-17z" fill="#f06a1d" stroke="#7a4a20" />
                  <path d="M2 2h3v3H2zM10.5 2h3v3h-3zM19 2h3v3h-3zM2 19h3v3H2zM10.5 19h3v3h-3zM19 19h3v3h-3z" fill="currentColor" stroke="none" />
                  <path d="m7.5 17.500 4.500-12 4.500 12M9 13.500h6" stroke="#fff" strokeWidth="2.5" />
                </Icon>
                <div className="flex h-6 w-[53px] shrink-0 border border-[#a6a6a6] bg-white">
                  <span className="w-[34px] px-[7px]">
                    <svg viewBox="0 0 20 22" className="h-[22px] w-5" stroke="#d8262c" aria-hidden="true">
                      <path d="M1 17 19 5" />
                    </svg>
                  </span>
                  <button type="button" aria-label="背景色" className="grid grow place-items-center border-l border-[#a6a6a6] bg-[#e3e3e3]">
                    <svg viewBox="0 0 8 4" className="h-1 w-2" fill="#6a6a6a" aria-hidden="true">
                      <path d="M0 0h8L4 4z" />
                    </svg>
                  </button>
                </div>
                <div className="ml-[7px]">
                  <Tick label="背景色" />
                </div>
                <Icon className="mr-1.5 ml-[23px] size-6">
                  <path d="M4 4.500h16M4 8.500h16M4 12.500h16M4 16.500h16" strokeDasharray="2 1" strokeWidth="1" />
                  <path d="m6 18.500 5.500-14h1l5.500 14M8.5 14h7.500" strokeWidth="2.6" />
                  <path d="M4 20h16" stroke="#1a9fd9" strokeWidth="1.5" />
                </Icon>
                <Tick label="与基线网格对齐" />
                <Icon className="mr-1.5 ml-[21px] size-6">
                  <path d="M5.5 5.500h13v13h-13z" />
                  <path d="M7.5 8.500h9M7.5 11h9M7.5 13.500h5" strokeWidth="1" />
                  <path d="M4 4h2.500v2.500H4zM17.5 4H20v2.500h-2.500zM4 17.500h2.500V20H4zM17.5 17.500H20V20h-2.500z" fill="currentColor" stroke="none" />
                  <Corner />
                </Icon>
                <Tick label="垂直对齐" />
              </div>
              <div className="flex h-[29px] items-center pt-[5px] pr-[7px] pl-px">
                <Icon className="mr-0.5 size-5">
                  <path d="M2 3.500h9M2 7.500h9M2 11.500h9M2 15.500h9M2 19.500h9" stroke="#1a9fd9" strokeWidth="1.6" />
                  <path d="M13 3.500h9M13 7.500h9M13 11.500h9M13 15.500h9M13 19.500h9" strokeWidth="1.6" />
                </Icon>
                <div className="flex h-6 w-[53px] shrink-0 border border-[#a6a6a6] bg-white">
                  <input aria-label="栏数" defaultValue="1" className="w-[34px] min-w-0 pl-[3px]" />
                  <div className="flex grow flex-col border-l border-[#a6a6a6] bg-[#ececec]">
                    <button type="button" aria-label="增加" className="grid grow place-items-center">
                      <svg viewBox="0 0 6 3" className="h-[3px] w-1.5" fill="#6a6a6a" aria-hidden="true">
                        <path d="M0 3h6L3 0z" />
                      </svg>
                    </button>
                    <button type="button" aria-label="减少" className="grid grow place-items-center">
                      <svg viewBox="0 0 6 3" className="h-[3px] w-1.5" fill="#6a6a6a" aria-hidden="true">
                        <path d="M0 0h6L3 3z" />
                      </svg>
                    </button>
                  </div>
                </div>
                <div className="ml-[7px]">
                  <Tick label="栏数" />
                </div>
                <Icon className="mr-1.5 ml-[23px] size-6 text-[#b5b5b5]">
                  <path d="M4 4.500h7M4 7.500h7M4 10.500h7M4 13.500h7M4 16.500h7M4 19.500h7M13 4.500h7M13 7.500h7M13 10.500h7M13 13.500h7M13 16.500h7M13 19.500h7" />
                </Icon>
                <Tick label="栏宽相等" />
                <button type="button" aria-label="栏设置" className="mr-2.5 ml-auto flex gap-0.5">
                  <span className="size-1 rounded-full bg-[#333]" />
                  <span className="size-1 rounded-full bg-[#333]" />
                  <span className="size-1 rounded-full bg-[#333]" />
                </button>
                <Tick label="栏" />
              </div>
            </div>
            <div className="mr-px flex w-[15px] shrink-0 flex-col bg-[#f0f0f0] text-[#444]">
              <button type="button" aria-label="向上滚动" className="grid h-[18px] shrink-0 place-items-center">
                <Chevron dir="up" />
              </button>
              <div className="flex grow flex-col">
                <span className="grow-[285]" />
                <span className="grow-[512] bg-[#cdcdcd]" />
              </div>
              <button type="button" aria-label="向下滚动" className="grid h-[22px] shrink-0 place-items-center">
                <Chevron dir="down" />
              </button>
            </div>
          </div>
        </div>
        <div className="flex w-5 shrink-0 flex-col items-center bg-[#e8e8e8]">
          <button type="button" className="flex h-[73px] w-5 shrink-0 flex-col items-center bg-[#cce0ff] pt-0.5">
            <svg viewBox="0 0 20 20" className="size-[18px]" fill="none" stroke="#333" strokeWidth="1.3" aria-hidden="true">
              <path d="M2 10 5 2.500 8 10M3 7.500h4" />
              <circle cx="14.5" cy="14" r="2.6" strokeWidth="1.8" />
              <circle cx="14.5" cy="14" r="4" strokeWidth="1.4" strokeDasharray="1.57 1.57" />
            </svg>
            <span className="mt-1 text-[13px] leading-5 [text-orientation:sideways] [writing-mode:vertical-rl]">文本</span>
          </button>
          <button type="button" aria-label="快速自定义" className="mt-1.5">
            <Plus />
          </button>
        </div>
      </div>
    </section>
  );
}

/* ---------- colour palettes ---------- */

function PaletteColumn({ children, off, last }: { children: ReactNode; off?: boolean; last?: boolean }) {
  return (
    <div className="flex w-[21px] shrink-0 flex-col items-center border-l border-[#d0d0d0] text-[#b5b5b5]">
      <Grip className="mt-0.5 h-1.5 w-4" />
      <button type="button" aria-label="调色板菜单" className="mt-1 grid h-[11px] shrink-0 place-items-center">
        <Triangle />
      </button>
      <button type="button" aria-label="滴管" className="mt-[5px] shrink-0">
        <Dropper off={off} />
      </button>
      <button type="button" aria-label="向上" className="mt-1 mb-1 grid h-3 shrink-0 place-items-center">
        <Chevron dir="up" />
      </button>
      {children}
      <button type="button" aria-label="向下" className="mt-auto mb-2">
        <Chevron dir="down" />
      </button>
      <button type="button" aria-label="更多" className={clsx("mb-3 flex", !last && "invisible")}>
        <Chevron dir="right" className="-mr-1 size-2" />
        <Chevron dir="right" className="size-2" />
      </button>
    </div>
  );
}

function Palettes() {
  return (
    <aside aria-label="调色板" className="flex shrink-0">
      <PaletteColumn off>
        <div className="w-[18px] border border-b-0 border-[#4d4d4d]">
          {PALETTE.map((c) => (
            <button
              key={c}
              type="button"
              aria-label={c}
              className={clsx(
                "block h-[17px] w-4 border-b border-[#4d4d4d]",
                c === SELECTED && "outline-1 outline-white"
              )}
              style={{ backgroundColor: c }}
            />
          ))}
        </div>
      </PaletteColumn>
      <PaletteColumn last>
        <button type="button" aria-label="无" className="size-[18px] shrink-0 border border-[#4d4d4d]">
          <NoFill />
        </button>
      </PaletteColumn>
    </aside>
  );
}

/* ---------- bottom ---------- */

function StatusBar() {
  return (
    <footer className="flex h-7 shrink-0 items-center border-t border-[#d0d0d0] pt-1.5 text-[13px]">
      <button type="button" aria-label="自定义状态栏" className="ml-[7px] text-[#2b2b2b]">
        <Icon>
          <Gear />
          <Corner />
        </Icon>
      </button>
      <p className="ml-[5px] grow">单击并拖动可添加段落文本</p>
      <div className="flex w-[206px] items-center">
        <Icon className="size-5">
          <Bucket />
        </Icon>
        <span className="size-[21px] border border-[#8a8a8a]">
          <NoFill />
        </span>
        <span className="pl-[5px]">无</span>
      </div>
      <svg viewBox="0 0 10 16" className="h-4 w-2.5" fill="none" stroke="#333" aria-hidden="true">
        <path d="M5 .5 8.5 7c0 2-1 3.500-1.500 5H3C2.5 10.500 1.500 9 1.500 7zM5 1v7M2.5 12.500h5v3h-5z" />
        <circle cx="5" cy="8.5" r="1" />
      </svg>
      <span className="ml-1 size-[21px] border border-[#555] bg-[#231916]" />
      <div className="ml-1 flex w-[217px] gap-3 font-['Liberation_Mono','Noto_Sans_CJK_SC',monospace] text-xs">
        <span>C:</span>
        <span>0M:</span>
        <span>0Y:</span>
        <span>0K:</span>
        <span>100</span>
      </div>
      <svg viewBox="0 0 16 18" className="mr-[11px] h-[18px] w-4" aria-hidden="true">
        <path d="M0 0h16v14H0z" fill="#222" />
        <path d="M1.5 1.500h13v5h-13z" fill="#e5402a" />
        <path d="M1.5 6.500h13v6h-13z" fill="#22a7d8" />
        <circle cx="8" cy="7" r="3" fill="none" stroke="#fff" strokeWidth="1.5" />
        <path d="M4 17h8" stroke="#222" strokeWidth="1.5" />
      </svg>
    </footer>
  );
}

function ImeBadge() {
  return (
    <div className="fixed right-[585px] bottom-11 z-30 flex h-7 w-[62px] items-center justify-center gap-1 rounded-md border border-[#8f8f8f] bg-white text-[13px] text-[#333] shadow-[0_1px_3px_rgba(0,0,0,0.5)]">
      CH
      <svg viewBox="0 0 12 12" className="size-3" fill="none" stroke="#333" aria-hidden="true">
        <path d="M6 .8c5 1 6 7 1.500 9.500C5 11.500 2 11 .8 9.500 5.500 9.500 8 5 6 .8z" />
      </svg>
      简
    </div>
  );
}

function Watermark() {
  return (
    <div className="pointer-events-none fixed right-2.5 bottom-1.5 z-30 flex items-center opacity-75" aria-hidden="true">
      <svg viewBox="0 0 44 44" className="size-11">
        <defs>
          <linearGradient id="swirl" x1="0" y1="0" x2="1" y2="1">
            <stop offset="0" stopColor="#3f8fd6" />
            <stop offset=".55" stopColor="#5bb9c9" />
            <stop offset="1" stopColor="#6cc069" />
          </linearGradient>
        </defs>
        <path d="M40 3C18 2 3 14 2 27c0 7 6 10 12 10-5-4-5-10-2-16C17 12 28 6 40 3z" fill="url(#swirl)" />
        <path d="M10 32c-1-7 6-12 14-11-6 2-9 5-8 10 1 3 4 3 6 2-4 5-11 4-12-1z" fill="#4f9fdc" />
        <path d="M17 42c12-1 22-9 23-17 0-7-9-9-18-4 7-1 10 1 10 6 0 6-7 11-15 15z" fill="#7cc46b" />
      </svg>
      <div className="flex flex-col items-start">
        <span className="text-[21px] leading-6 font-bold text-[#6ba4dd]">极光下载站</span>
        <span className="text-base leading-5 font-medium text-[#58b77b]">www.xz7.com</span>
      </div>
    </div>
  );
}

export default function App() {
  return (
    <div className="flex h-screen min-h-[900px] flex-col overflow-hidden bg-[#f3f3f3] font-['Noto_Sans','Noto_Sans_CJK_SC',sans-serif] text-black">
      <TitleBar />
      <MenuBar />
      <StandardBar />
      <PropertyBar />
      <div className="flex min-h-0 grow">
        <Toolbox />
        <Workspace />
        <div className="flex w-[5px] shrink-0 justify-center bg-white">
          <span className="w-px bg-[#c4c4c4]" />
        </div>
        <TextDocker />
        <Palettes />
      </div>
      <StatusBar />
      <ImeBadge />
      <Watermark />
    </div>
  );
}
